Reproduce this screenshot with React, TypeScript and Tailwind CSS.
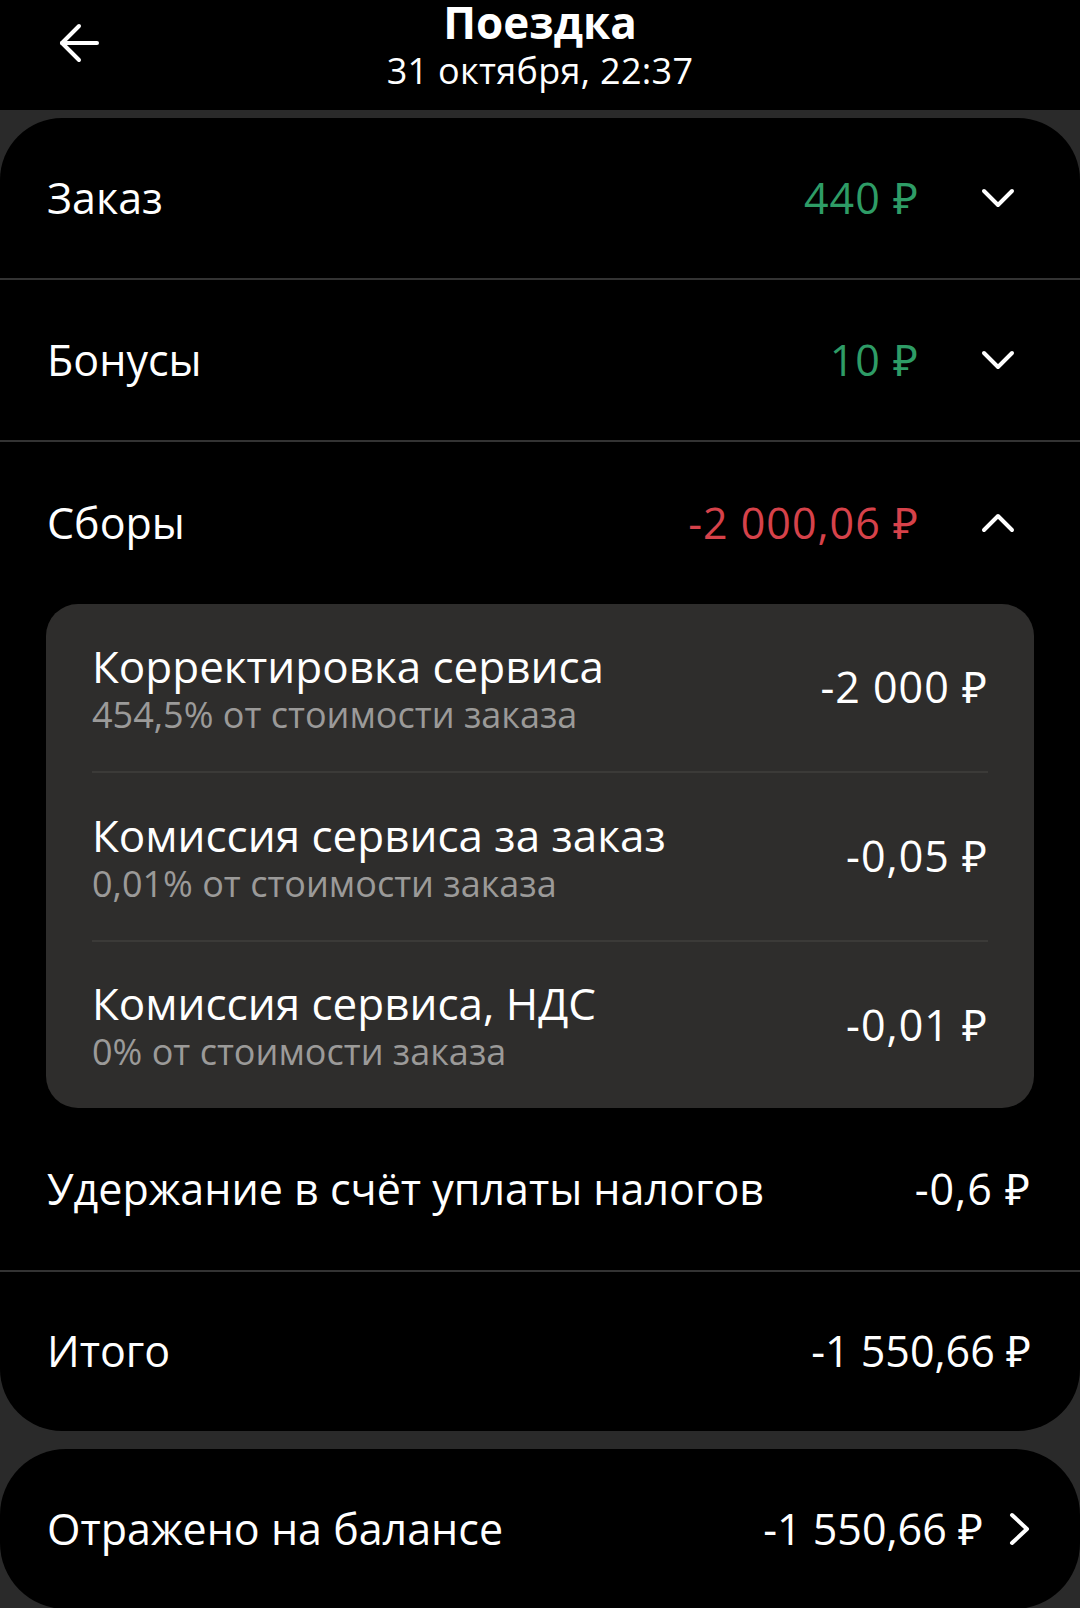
import React from "react";

const font = { fontFamily: "'Open Sans', 'Noto Sans', sans-serif" };

function Chevron({ up = false }: { up?: boolean }) {
    return (
        <svg width="34" height="20" viewBox="0 0 34 20" className={up ? "rotate-180" : ""}>
            <polyline points="3,3 17,17 31,3" fill="none" stroke="white" strokeWidth="4" strokeLinecap="round" strokeLinejoin="round" />
        </svg>
    );
}

function Section({ title, value, color, up, tall }: { title: string; value: string; color: string; up?: boolean; tall?: boolean }) {
    return (
        <div className={`flex items-center pl-[47px] pr-[65px] ${tall ? "h-[162px]" : "h-[160px]"}`}>
            <span className="flex-1 text-[43px] text-white">{title}</span>
            <span className={`text-[43px] tracking-[1px] ${color}`}>{value}</span>
            <span className="ml-[62px] flex w-[34px] justify-center">
                <Chevron up={up} />
            </span>
        </div>
    );
}

const fees = [
    { title: "Корректировка сервиса", sub: "454,5% от стоимости заказа", value: "-2 000 ₽", h: "h-[167px]" },
    { title: "Комиссия сервиса за заказ", sub: "0,01% от стоимости заказа", value: "-0,05 ₽", h: "h-[167px]" },
    { title: "Комиссия сервиса, НДС", sub: "0% от стоимости заказа", value: "-0,01 ₽", h: "h-[166px]" },
];

export default function App() {
    return (
        <div className="h-[1608px] w-[1080px] overflow-hidden bg-[#2a2a2a]" style={font}>
            {/* шапка */}
            <div className="relative flex h-[110px] flex-col items-center bg-black">
                <svg width="40" height="40" viewBox="0 0 40 40" className="absolute left-[59px] top-[23px]">
                    <line x1="3" y1="20" x2="38" y2="20" stroke="white" strokeWidth="4" strokeLinecap="round" />
                    <polyline points="20,3 3,20 20,37" fill="none" stroke="white" strokeWidth="4" strokeLinecap="round" strokeLinejoin="round" />
                </svg>
                <div className="text-[44px] font-bold leading-[44px] text-white">Поездка</div>
                <div className="mt-[5px] text-[36px] leading-[44px] tracking-[0.3px] text-white">31 октября, 22:37</div>
            </div>

            <div className="mt-[8px] rounded-[62px] bg-black">
                <Section title="Заказ" value="440 ₽" color="text-[#2e9c66]" />
                <div className="h-[2px] bg-[#333333]" />
                <Section title="Бонусы" value="10 ₽" color="text-[#2e9c66]" />
                <div className="h-[2px] bg-[#333333]" />
                <Section title="Сборы" value="-2 000,06 ₽" color="text-[#d6424a]" up tall />

                <div className="mx-[46px] rounded-[32px] bg-[#2e2d2c]">
                    {fees.map((f, i) => (
                        <div key={f.title} className="px-[46px]">
                            {i > 0 && <div className="h-[2px] bg-[#3b3a38]" />}
                            <div className={`flex items-center ${f.h}`}>
                                <div className="flex flex-1 flex-col pt-[4px]">
                                    <div className="text-[44px] leading-[50px] text-white">{f.title}</div>
                                    <div className="text-[36px] leading-[48px] text-[#9b9a99]">{f.sub}</div>
                                </div>
                                <span className="text-[43px] tracking-[1px] text-white">{f.value}</span>
                            </div>
                        </div>
                    ))}
                </div>

                <div className="flex h-[162px] items-center pl-[47px] pr-[49px] text-[43px] text-white">
                    <span className="flex-1">Удержание в счёт уплаты налогов</span>
                    <span className="tracking-[1px]">-0,6 ₽</span>
                </div>
                <div className="h-[2px] bg-[#333333]" />
                <div className="flex h-[159px] items-center pl-[47px] pr-[49px] text-[43px] text-white">
                    <span className="flex-1">Итого</span>
                    <span>-1 550,66 ₽</span>
                </div>
            </div>

            <div className="mt-[18px] flex h-[160px] items-center rounded-[66px] bg-black pl-[47px] pr-[49px] text-[43px] text-white">
                <span className="flex-1">Отражено на балансе</span>
                <span>-1 550,66 ₽</span>
                <svg width="22" height="34" viewBox="0 0 22 34" className="ml-[26px]">
                    <polyline points="3,3 18,17 3,31" fill="none" stroke="white" strokeWidth="4" strokeLinecap="round" strokeLinejoin="round" />
                </svg>
            </div>
        </div>
    );
}
